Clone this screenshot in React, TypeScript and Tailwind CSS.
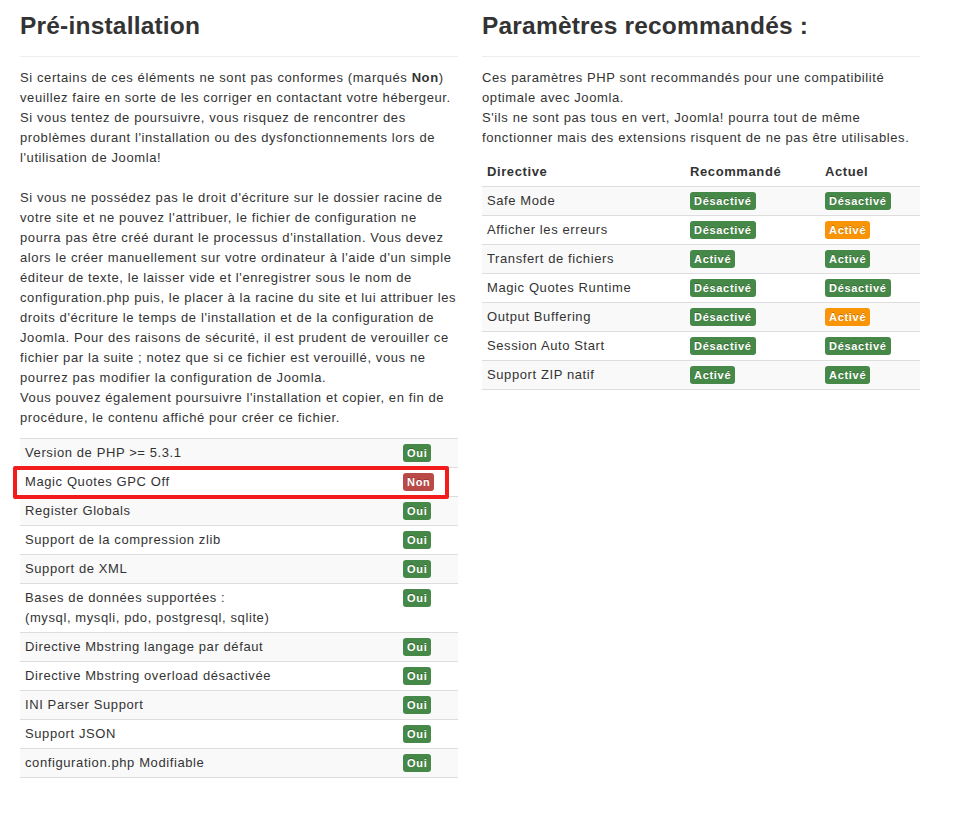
import React from "react";

type Check = { label: React.ReactNode; ok: boolean };

const checks: Check[] = [
    { label: "Version de PHP >= 5.3.1", ok: true },
    { label: "Magic Quotes GPC Off", ok: false },
    { label: "Register Globals", ok: true },
    { label: "Support de la compression zlib", ok: true },
    { label: "Support de XML", ok: true },
    {
        label: (
            <>
                Bases de données supportées :
                <br />
                (mysql, mysqli, pdo, postgresql, sqlite)
            </>
        ),
        ok: true,
    },
    { label: "Directive Mbstring langage par défaut", ok: true },
    { label: "Directive Mbstring overload désactivée", ok: true },
    { label: "INI Parser Support", ok: true },
    { label: "Support JSON", ok: true },
    { label: "configuration.php Modifiable", ok: true },
];

type Setting = { name: string; recommended: boolean; current: boolean };

const settings: Setting[] = [
    { name: "Safe Mode", recommended: false, current: false },
    { name: "Afficher les erreurs", recommended: false, current: true },
    { name: "Transfert de fichiers", recommended: true, current: true },
    { name: "Magic Quotes Runtime", recommended: false, current: false },
    { name: "Output Buffering", recommended: false, current: true },
    { name: "Session Auto Start", recommended: false, current: false },
    { name: "Support ZIP natif", recommended: true, current: true },
];

// lines as the installer wraps them
const introLines: React.ReactNode[] = [
    <>
        Si certains de ces éléments ne sont pas conformes (marqués <strong>Non</strong>)
    </>,
    "veuillez faire en sorte de les corriger en contactant votre hébergeur.",
    "Si vous tentez de poursuivre, vous risquez de rencontrer des",
    "problèmes durant l'installation ou des dysfonctionnements lors de",
    "l'utilisation de Joomla!",
    "",
    "Si vous ne possédez pas le droit d'écriture sur le dossier racine de",
    "votre site et ne pouvez l'attribuer, le fichier de configuration ne",
    "pourra pas être créé durant le processus d'installation. Vous devez",
    "alors le créer manuellement sur votre ordinateur à l'aide d'un simple",
    "éditeur de texte, le laisser vide et l'enregistrer sous le nom de",
    "configuration.php puis, le placer à la racine du site et lui attribuer les",
    "droits d'écriture le temps de l'installation et de la configuration de",
    "Joomla. Pour des raisons de sécurité, il est prudent de verouiller ce",
    "fichier par la suite ; notez que si ce fichier est verouillé, vous ne",
    "pourrez pas modifier la configuration de Joomla.",
    "Vous pouvez également poursuivre l'installation et copier, en fin de",
    "procédure, le contenu affiché pour créer ce fichier.",
];

const settingsLines = [
    "Ces paramètres PHP sont recommandés pour une compatibilité",
    "optimale avec Joomla.",
    "S'ils ne sont pas tous en vert, Joomla! pourra tout de même",
    "fonctionner mais des extensions risquent de ne pas être utilisables.",
];

function Label({ tone, children }: { tone: "success" | "important" | "warning"; children: React.ReactNode }) {
    const colors = {
        success: "bg-[#468847]",
        important: "bg-[#b94a48]",
        warning: "bg-[#f89406]",
    };
    return (
        <span
            className={`inline-block rounded-[3px] px-1 py-[2px] align-baseline text-[11px] leading-[14px] font-bold tracking-[0.7px] whitespace-nowrap text-white [text-shadow:0_-1px_0_rgba(0,0,0,0.25)] ${colors[tone]}`}
        >
            {children}
        </span>
    );
}

function SectionTitle({ children }: { children: React.ReactNode }) {
    return (
        <>
            <h3 className="mt-[6px] text-[24.5px] leading-[40px] font-bold tracking-[0.2px] text-[#333]">{children}</h3>
            <hr className="mt-[10px] mb-[10px] border-0 border-t border-b border-t-[#eee] border-b-white" />
        </>
    );
}

function Lines({ lines }: { lines: React.ReactNode[] }) {
    return (
        <p className="mb-[10px] whitespace-nowrap">
            {lines.map((l, i) => (
                <React.Fragment key={i}>
                    {l}
                    {i < lines.length - 1 && <br />}
                </React.Fragment>
            ))}
        </p>
    );
}

export default function App() {
    return (
        <div className="min-h-[819px] bg-white font-['Liberation_Sans',Arial,sans-serif] text-[13px] leading-[20px] tracking-[0.6px] text-[#333]">
            <div className="ml-5 grid w-[900px] grid-cols-2 gap-6">
                {/* Pre-installation checks */}
                <div>
                    <SectionTitle>Pré-installation</SectionTitle>
                    <Lines lines={introLines} />
                    <div className="relative">
                        <table className="w-full border-b border-[#ddd]">
                            <tbody>
                                {checks.map((c, i) => (
                                    <tr key={i} className={i % 2 === 0 ? "bg-[#f9f9f9]" : "bg-white"}>
                                        <td className="border-t border-[#ddd] px-[5px] py-1 align-top">{c.label}</td>
                                        <td className="w-[60px] border-t border-[#ddd] px-[5px] py-1 align-top">
                                            {c.ok ? <Label tone="success">Oui</Label> : <Label tone="important">Non</Label>}
                                        </td>
                                    </tr>
                                ))}
                            </tbody>
                        </table>
                        {/* annotation around the failing check */}
                        <div className="pointer-events-none absolute top-[28px] left-[-7px] h-[33px] w-[436px] rounded-[2px] border-4 border-[#f21c1c]" />
                    </div>
                </div>

                {/* Recommended settings */}
                <div>
                    <SectionTitle>Paramètres recommandés :</SectionTitle>
                    <Lines lines={settingsLines} />
                    <table className="w-full border-b border-[#ddd]">
                        <thead>
                            <tr>
                                <th className="px-[5px] py-1 text-left align-bottom font-bold">Directive</th>
                                <th className="w-[135px] px-[5px] py-1 text-left align-bottom font-bold">Recommandé</th>
                                <th className="w-[100px] px-[5px] py-1 text-left align-bottom font-bold">Actuel</th>
                            </tr>
                        </thead>
                        <tbody>
                            {settings.map((s, i) => (
                                <tr key={s.name} className={i % 2 === 0 ? "bg-[#f9f9f9]" : "bg-white"}>
                                    <td className="border-t border-[#ddd] px-[5px] py-1">{s.name}</td>
                                    <td className="border-t border-[#ddd] px-[5px] py-1">
                                        <Label tone="success">{s.recommended ? "Activé" : "Désactivé"}</Label>
                                    </td>
                                    <td className="border-t border-[#ddd] px-[5px] py-1">
                                        <Label tone={s.current === s.recommended ? "success" : "warning"}>
                                            {s.current ? "Activé" : "Désactivé"}
                                        </Label>
                                    </td>
                                </tr>
                            ))}
                        </tbody>
                    </table>
                </div>
            </div>
        </div>
    );
}
